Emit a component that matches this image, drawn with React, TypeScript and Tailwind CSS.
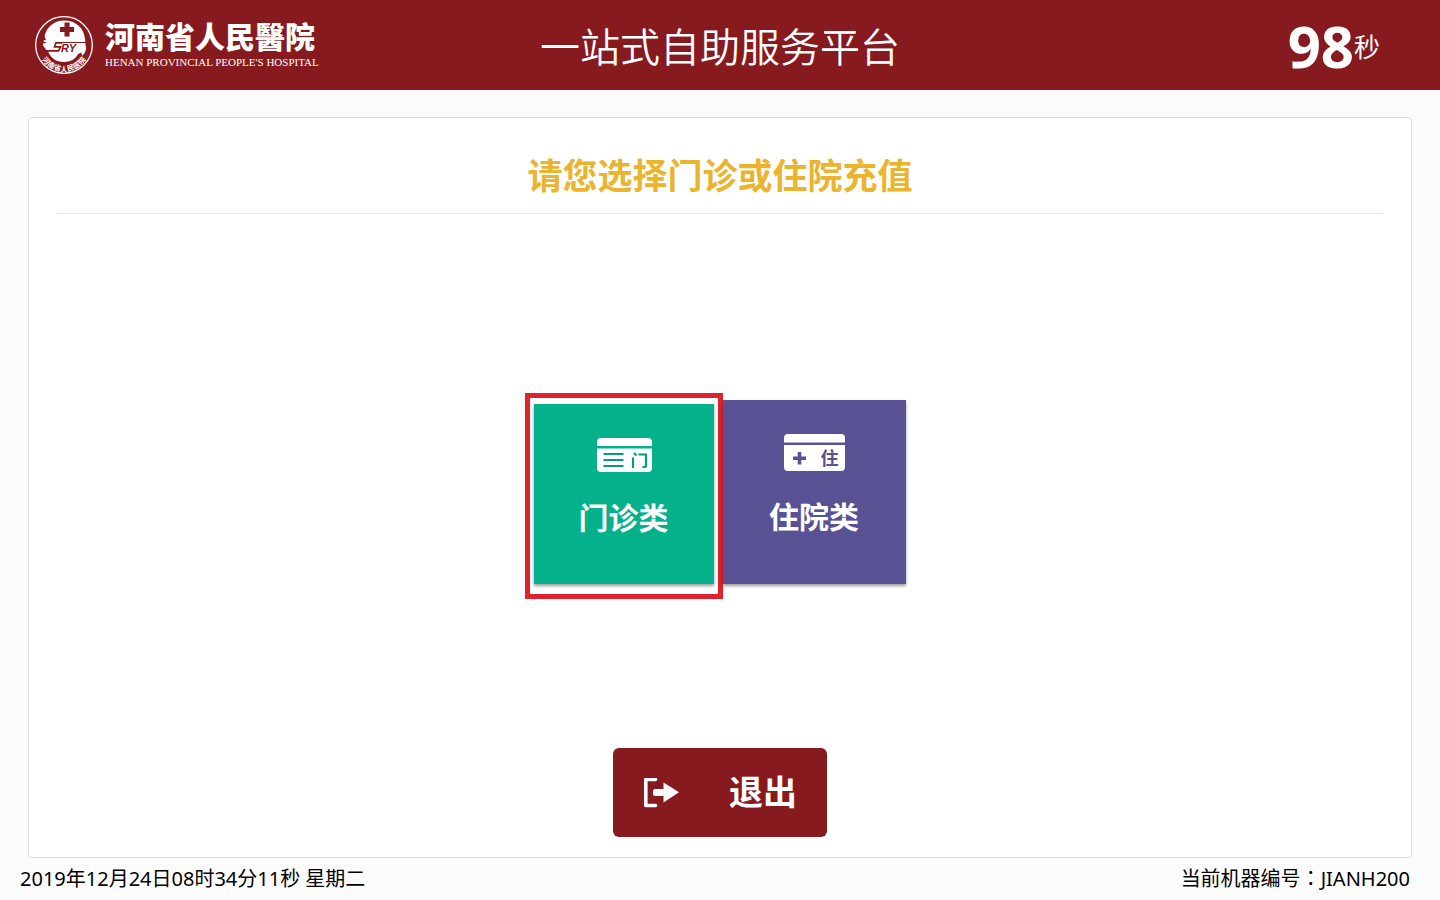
import React from "react";

function HospitalEmblem() {
  return (
    <svg viewBox="0 0 60 60" className="size-[60px]" role="img" aria-label="河南省人民医院">
      <defs>
        <path id="emblem-arc" d="M3.500 30 A26.500 26.500 0 0 0 56.500 30" />
      </defs>
      <circle cx="30" cy="30" r="28.3" fill="none" stroke="#fff" strokeWidth="1.3" />
      <path
        d="M30 5.500 C42 5.500 50 13 51 24 L52 34 C51.500 37 50 39 48 41 L47.500 37.500 L44 39 C42 44 36 47 30 47 C22 47 17 43 14 36.500 L12 34.500 L9 30.500 L9 28.500 L13 28 L9 26 L12 24.500 C10 22 10.500 20 12 17 C15 10 22 5.500 30 5.500 Z"
        fill="#fff"
      />
      <path d="M30.500 7.500h5v4.500h4.500v5h-4.500v4.500h-5v-4.500h-4.500v-5h4.500z" fill="#861a1e" />
      <path d="M11 35.800H24.500L26.500 31.800H20.500L22 27.800H28" fill="none" stroke="#861a1e" strokeWidth="1.7" />
      <path d="M22 27.500H52" fill="none" stroke="#861a1e" strokeWidth="1" />
      <text x="27" y="36.500" fontSize="11" fontWeight="700" fontStyle="italic" className="fill-[#861a1e] font-['Liberation_Sans',sans-serif]">
        RY
      </text>
      <text fontSize="7.4" fontWeight="700" className="fill-white font-['Noto_Sans_CJK_SC',sans-serif]">
        <textPath href="#emblem-arc" startOffset="50%" textAnchor="middle">
          河南省人民医院
        </textPath>
      </text>
    </svg>
  );
}

function OutpatientIcon() {
  return (
    <svg viewBox="0 0 56 34" className="h-[34px] w-14" aria-hidden="true">
      <path d="M5 0h47a4 4 0 0 1 4 4v4H1V4a4 4 0 0 1 4-4z" fill="#fff" />
      <path d="M1 10.500h55V30a4 4 0 0 1-4 4H5a4 4 0 0 1-4-4z" fill="#fff" />
      <path d="M7.500 16h20M7.500 22h20M7.500 28h20" stroke="#0b9a78" strokeWidth="2.200" />
      <path d="M37 19.500V30M38 15l2.500 2.500M42.500 16.500H50V27.500q0 1.500-1.500 1.500H46.500" stroke="#0b9a78" strokeWidth="2.200" fill="none" />
    </svg>
  );
}

function InpatientIcon() {
  return (
    <svg viewBox="0 0 61 37" className="h-[37px] w-[61px]" aria-hidden="true">
      <path d="M4 0h53a4 4 0 0 1 4 4v4.500H0V4a4 4 0 0 1 4-4z" fill="#fff" />
      <path d="M0 11h61v22a4 4 0 0 1-4 4H4a4 4 0 0 1-4-4z" fill="#fff" />
      <path d="M15.500 18v12.500M9 24.200h13" stroke="#585194" strokeWidth="3.600" />
      <text x="36.500" y="31" fontSize="18" fontWeight="700" className="fill-[#585194] font-['Noto_Sans_CJK_SC',sans-serif]">
        住
      </text>
    </svg>
  );
}

function ExitIcon() {
  return (
    <svg viewBox="0 0 36 30" className="h-[30px] w-9" aria-hidden="true">
      <path d="M12.500 1.500H2.800V27.500H12.500" fill="none" stroke="#fff" strokeWidth="3.600" strokeLinecap="round" strokeLinejoin="round" />
      <path d="M12 11H20.500V4.500L36 14.300 20.500 24.500V18H12a2 2 0 0 1-2-2V13a2 2 0 0 1 2-2z" fill="#fff" />
    </svg>
  );
}

export default function App() {
  return (
    <div className="flex min-h-screen flex-col bg-[#fcfcfc] font-['Noto_Sans','Noto_Sans_CJK_SC',sans-serif] text-black">
      <header className="grid h-[90px] grid-cols-[1fr_auto_1fr] items-center bg-[#861a1e] text-white">
        <div className="flex items-center gap-[11px] pl-[34px]">
          <HospitalEmblem />
          <div className="whitespace-nowrap">
            <p className="text-[30px] leading-[34px] font-black">河南省人民醫院</p>
            <p className="font-['Liberation_Serif',serif] text-[11px] leading-4">HENAN PROVINCIAL PEOPLE'S HOSPITAL</p>
          </div>
        </div>
        <h1 className="font-['Noto_Sans_CJK_SC',sans-serif] text-[40px] font-[350]">一站式自助服务平台</h1>
        <div className="flex items-center justify-end pt-0.5 pr-[60px]">
          <span className="font-['Open_Sans',sans-serif] text-[58px] leading-none font-bold">98</span>
          <span className="font-['Noto_Sans_CJK_SC',sans-serif] text-[26px] leading-none font-normal">秒</span>
        </div>
      </header>

      <main className="mx-7 mt-[27px] flex flex-1 flex-col items-center rounded border border-[#dcdcdc] bg-white px-7 pb-5">
        <h2 className="h-24 w-full border-b border-[#e4e4e4] pt-8 text-center text-[35px] leading-[52px] font-bold text-[#ebb42f]">
          请您选择门诊或住院充值
        </h2>

        <div className="flex flex-1 items-center pt-[30px] pr-2.5">
          <div className="flex items-end">
            <div className="border-[5px] border-[#df222c] bg-white px-1 pt-1.5 pb-2.5">
              <button type="button" className="flex size-[180px] flex-col items-center bg-[#04b18b] pt-[34px] text-white shadow-[0_2px_3px_rgba(0,0,0,0.4)]">
                <OutpatientIcon />
                <span className="mt-6 text-[30px] leading-[44px] font-bold">门诊类</span>
              </button>
            </div>
            <button type="button" className="mb-[15px] flex h-[184px] w-[183px] flex-col items-center bg-[#585194] pt-[34px] text-white shadow-[0_2px_3px_rgba(0,0,0,0.4)]">
              <InpatientIcon />
              <span className="mt-6 text-[30px] leading-[44px] font-bold">住院类</span>
            </button>
          </div>
        </div>

        <button type="button" className="flex h-[89px] w-[214px] items-center justify-between rounded-md bg-[#861a1e] px-[30px] text-white">
          <ExitIcon />
          <span className="text-[34px] font-bold">退出</span>
        </button>
      </main>

      <footer className="flex h-[42px] items-center justify-between pr-[30px] pl-5 text-xl">
        <time dateTime="2019-12-24T08:34:11">2019年12月24日08时34分11秒 星期二</time>
        <span>
          当前机器编号<span className="font-['Noto_Sans_CJK_TC',sans-serif] leading-none">：</span>JIANH200
        </span>
      </footer>
    </div>
  );
}
